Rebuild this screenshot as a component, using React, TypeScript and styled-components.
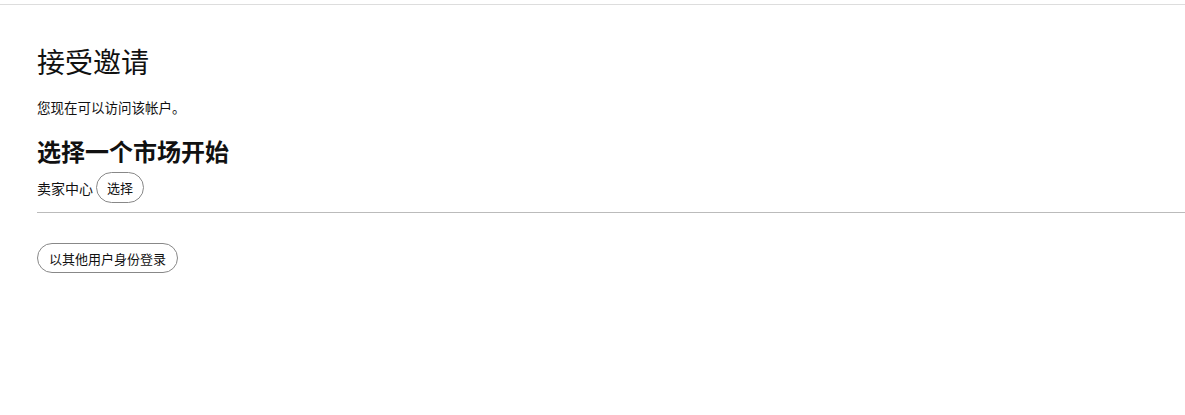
import styled, { createGlobalStyle } from "styled-components";

const GlobalStyle = createGlobalStyle`
    body {
        margin: 0;
        background: #fff;
        color: #111;
        font-family: "Noto Sans CJK SC", "Noto Sans", sans-serif;
    }
`;

const TopBar = styled.div`
    height: 4px;
    border-bottom: 1px solid #dddddd;
`;

const Page = styled.main`
    padding: 36px 0 0 37px;
`;

const Title = styled.h1`
    margin: 0;
    font-size: 28px;
    font-weight: 400;
    line-height: 40px;
`;

const Note = styled.p`
    margin: 16px 0 0;
    font-size: 13.5px;
    line-height: 20px;
`;

const Section = styled.h2`
    margin: 18px 0 0;
    font-size: 24px;
    font-weight: 700;
    line-height: 32px;
`;

const MarketRow = styled.div`
    display: flex;
    align-items: center;
    gap: 3px;
    margin-top: 5px;
    padding-bottom: 9px;
    border-bottom: 1px solid #bbbbbb;
`;

const MarketName = styled.span`
    font-size: 14px;
`;

const PillButton = styled.button<{wide?: boolean}>`
    font-family: inherit;
    font-size: 13px;
    color: #111;
    background: #fff;
    border: 1px solid #888888;
    border-radius: 16px;
    height: ${(props) => (props.wide ? '30px' : '31px')};
    padding: 0 ${(props) => (props.wide ? '11px' : '10px')};
    cursor: pointer;
`;

const Footer = styled.div`
    padding-top: 30px;
`;

export default function App(){
    return(
        <>
            <GlobalStyle/>
            <TopBar/>
            <Page>
                <Title>接受邀请</Title>
                <Note>您现在可以访问该帐户。</Note>
                <Section>选择一个市场开始</Section>
                <MarketRow>
                    <MarketName>卖家中心</MarketName>
                    <PillButton>选择</PillButton>
                </MarketRow>
                <Footer>
                    <PillButton wide>以其他用户身份登录</PillButton>
                </Footer>
            </Page>
        </>
    )
}
